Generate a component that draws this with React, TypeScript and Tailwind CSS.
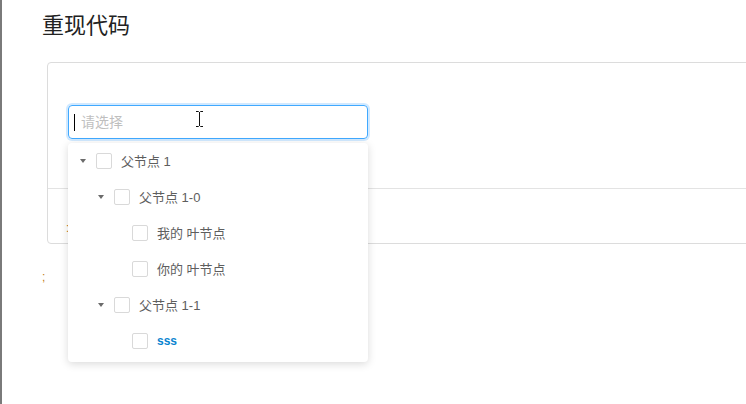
import React from "react";

const FONT = '"Liberation Sans", "Noto Sans CJK SC", sans-serif';

function Caret() {
  return (
    <svg width="6" height="4" viewBox="0 0 6 4" className="block">
      <path d="M0 0 L6 0 L3 4 Z" fill="#6b6b6b" />
    </svg>
  );
}

function Checkbox() {
  return <span className="block w-4 h-4 border border-[#d9d9d9] rounded-[2px] bg-white shrink-0" />;
}

type Node = { label: string; level: number; parent: boolean; blue?: boolean };

const nodes: Node[] = [
  { label: "父节点 1", level: 0, parent: true },
  { label: "父节点 1-0", level: 1, parent: true },
  { label: "我的 叶节点", level: 2, parent: false },
  { label: "你的 叶节点", level: 2, parent: false },
  { label: "父节点 1-1", level: 1, parent: true },
  { label: "sss", level: 2, parent: false, blue: true },
];

function Row({ n }: { n: Node }) {
  const indent = n.level === 0 ? "pl-[12px]" : n.level === 1 ? "pl-[30px]" : "pl-[48px]";
  return (
    <div className={`flex items-center h-9 ${indent}`}>
      <span className="w-4 flex items-center justify-start">{n.parent ? <Caret /> : null}</span>
      <Checkbox />
      {n.blue ? (
        <span className="ml-[9px] text-[12px] font-bold text-[#0a84d0]">sss</span>
      ) : (
        <span className="ml-[9px] text-[13px] text-[#5e5e5e] leading-none">{n.label}</span>
      )}
    </div>
  );
}

function IBeam() {
  return (
    <svg width="9" height="16" viewBox="0 0 9 16" className="absolute left-[193px] top-[111px]">
      <path
        d="M1 0.5 H3.5 M5.5 0.5 H8 M4.5 1 V15 M1 15.5 H3.5 M5.5 15.5 H8 M3.5 0.5 L4.5 1.5 L5.5 0.5 M3.5 15.5 L4.5 14.5 L5.5 15.5"
        stroke="#111"
        strokeWidth="1"
        fill="none"
      />
    </svg>
  );
}

export default function App() {
  return (
    <div
      className="relative w-[746px] h-[404px] overflow-hidden bg-white border-l-2 border-[#7a7a7a]"
      style={{ fontFamily: FONT }}
    >
      <div className="pl-[40px] pt-[11px]">
        <h1 className="text-[22px] leading-[30px] text-[#222]">重现代码</h1>
      </div>
      <div className="ml-[45px] mt-[21px] w-[760px] h-[182px] border border-[#dcdcdc] rounded-[4px] flex flex-col">
        <div className="h-[126px] pl-[20px] pt-[42px] border-b border-[#e3e3e3]">
          <div className="w-[300px] h-[34px] rounded-[4px] border border-[#40a9ff] shadow-[0_0_0_2px_rgba(24,144,255,0.2)] flex items-center pl-[5px]">
            <span className="w-[1px] h-[17px] bg-black" />
            <span className="ml-[6px] text-[14px] text-[#bfbfbf]">请选择</span>
          </div>
        </div>
        <div className="pl-[18px] pt-[30px] text-[12px] text-[#c27c1a]">:</div>
      </div>
      <div className="pl-[40px] pt-[27px] text-[12px] text-[#c27c1a] leading-none">;</div>

      <div className="absolute left-[66px] top-[143px] w-[300px] bg-white rounded-[4px] shadow-[0_2px_8px_rgba(0,0,0,0.15)] pb-[3px]">
        {nodes.map((n, i) => (
          <Row key={i} n={n} />
        ))}
      </div>
      <IBeam />
    </div>
  );
}
